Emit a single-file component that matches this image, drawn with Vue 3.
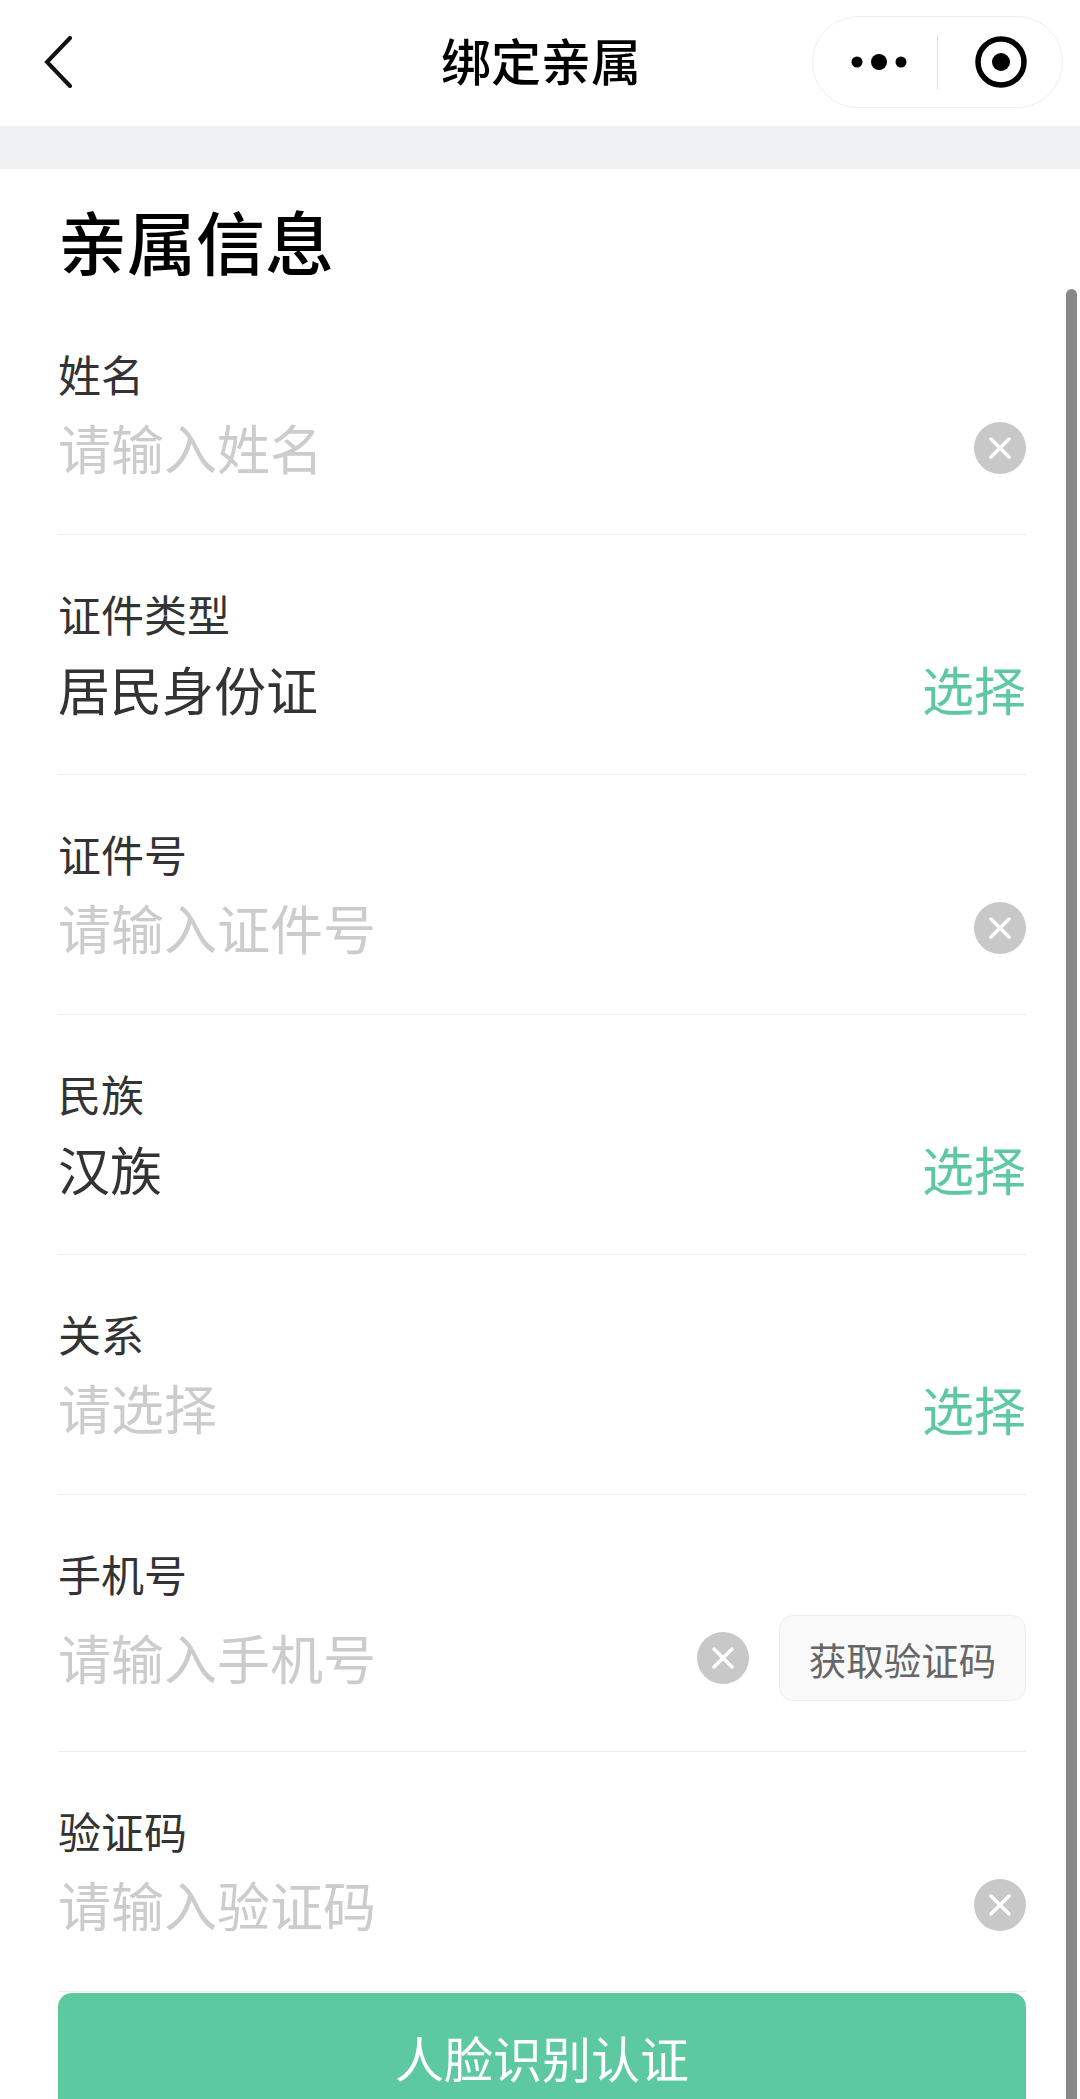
<template>
  <div class="page">
    <header class="nav-bar">
      <svg class="back" viewBox="0 0 30 52" width="30" height="52">
        <path d="M27 2 L4 26 L27 50" fill="none" stroke="#111" stroke-width="4" stroke-linecap="round" stroke-linejoin="miter" />
      </svg>
      <div class="nav-title">绑定亲属</div>
      <div class="capsule">
        <svg class="dots" viewBox="0 0 56 20" width="56" height="20">
          <circle cx="6" cy="10" r="5.5" fill="#000" />
          <circle cx="28" cy="10" r="8" fill="#000" />
          <circle cx="50" cy="10" r="5.5" fill="#000" />
        </svg>
        <span class="capsule-line"></span>
        <svg class="target" viewBox="0 0 52 52" width="52" height="52">
          <circle cx="26" cy="26" r="23" fill="none" stroke="#000" stroke-width="5.5" />
          <circle cx="26" cy="26" r="9" fill="#000" />
        </svg>
      </div>
    </header>
    <div class="band"></div>

    <main class="form">
      <h1 class="form-title">亲属信息</h1>
      <div v-for="row in rows" :key="row.label" class="row" :class="{ tall: row.code }">
        <div class="label">{{ row.label }}</div>
        <div class="value-line">
          <span class="value" :class="{ placeholder: row.placeholder }">{{ row.placeholder || row.value }}</span>
          <span v-if="row.pick" class="pick">选择</span>
          <svg v-else class="clear" viewBox="0 0 52 52" width="52" height="52">
            <circle cx="26" cy="26" r="26" fill="#c8c8c8" />
            <path d="M17 17 L35 35 M35 17 L17 35" stroke="#fff" stroke-width="3.5" stroke-linecap="round" />
          </svg>
          <button v-if="row.code" class="code-btn">获取验证码</button>
        </div>
      </div>
      <button class="submit">人脸识别认证</button>
    </main>

    <div class="scrollbar"></div>
  </div>
</template>

<script setup>
const rows = [
  { label: "姓名", placeholder: "请输入姓名" },
  { label: "证件类型", value: "居民身份证", pick: true },
  { label: "证件号", placeholder: "请输入证件号" },
  { label: "民族", value: "汉族", pick: true },
  { label: "关系", placeholder: "请选择", pick: true },
  { label: "手机号", placeholder: "请输入手机号", code: true },
  { label: "验证码", placeholder: "请输入验证码" },
];
</script>

<style>
html,
body {
  background: #fff;
  overflow: hidden;
}
</style>

<style scoped>
.page {
  position: relative;
  width: 1080px;
  height: 2099px;
  overflow: hidden;
  background: #fff;
  font-family: "Liberation Sans", "Noto Sans CJK SC", sans-serif;
}

.nav-bar {
  position: relative;
  height: 126px;
  display: flex;
  align-items: center;
  justify-content: center;
  background: #fff;
}

.back {
  position: absolute;
  left: 43px;
  top: 36px;
}

.nav-title {
  margin-top: -8px;
  margin-left: 2px;
  font-size: 50px;
  font-weight: 500;
  color: #000;
}

.capsule {
  position: absolute;
  left: 812px;
  top: 16px;
  width: 251px;
  height: 92px;
  box-sizing: border-box;
  display: flex;
  align-items: center;
  padding-left: 38px;
  border: 1px solid #eeeeee;
  border-radius: 46px;
  background: #fff;
}

.capsule-line {
  width: 1px;
  height: 54px;
  margin-left: 30px;
  margin-right: 37px;
  background: #dddddd;
}

.band {
  height: 43px;
  background: #f0f1f3;
}

.form {
  padding: 0 54px 0 58px;
}

.form-title {
  margin: 0;
  padding-top: 35px;
  height: 116px;
  box-sizing: border-box;
  font-size: 69px;
  line-height: 86px;
  font-weight: 500;
  color: #000;
}

.row {
  height: 240px;
  box-sizing: border-box;
  padding-top: 58px;
  border-bottom: 1px solid #eeeeee;
}

.row:first-of-type {
  height: 250px;
  padding-top: 68px;
}

.row.tall {
  height: 257px;
}

.label {
  font-size: 43px;
  line-height: 48px;
  color: #333;
}

.value-line {
  display: flex;
  align-items: center;
  height: 72px;
  margin-top: 11px;
}

.value {
  flex: 1;
  font-size: 52px;
  color: #333;
}

.value.placeholder {
  position: relative;
  top: -1px;
  font-size: 53px;
  color: #cccccc;
}

.pick {
  font-size: 52px;
  color: #5cc9a0;
}

.clear {
  flex: none;
}

.tall .value-line {
  margin-top: 21px;
}

.code-btn {
  width: 247px;
  height: 86px;
  margin-left: 30px;
  padding: 0;
  border: 1px solid #eeeeee;
  border-radius: 14px;
  background: #f9f9f9;
  font-family: inherit;
  font-size: 37.5px;
  color: #666;
}

.submit {
  display: block;
  width: 100%;
  height: 150px;
  margin-top: 1px;
  padding: 0 0 24px;
  border: none;
  border-radius: 14px;
  background: #5cc9a0;
  font-family: inherit;
  font-size: 49px;
  color: #fff;
}

.scrollbar {
  position: absolute;
  left: 1066px;
  top: 289px;
  width: 11px;
  bottom: 0;
  border-radius: 6px 6px 0 0;
  background: #888888;
}
</style>
